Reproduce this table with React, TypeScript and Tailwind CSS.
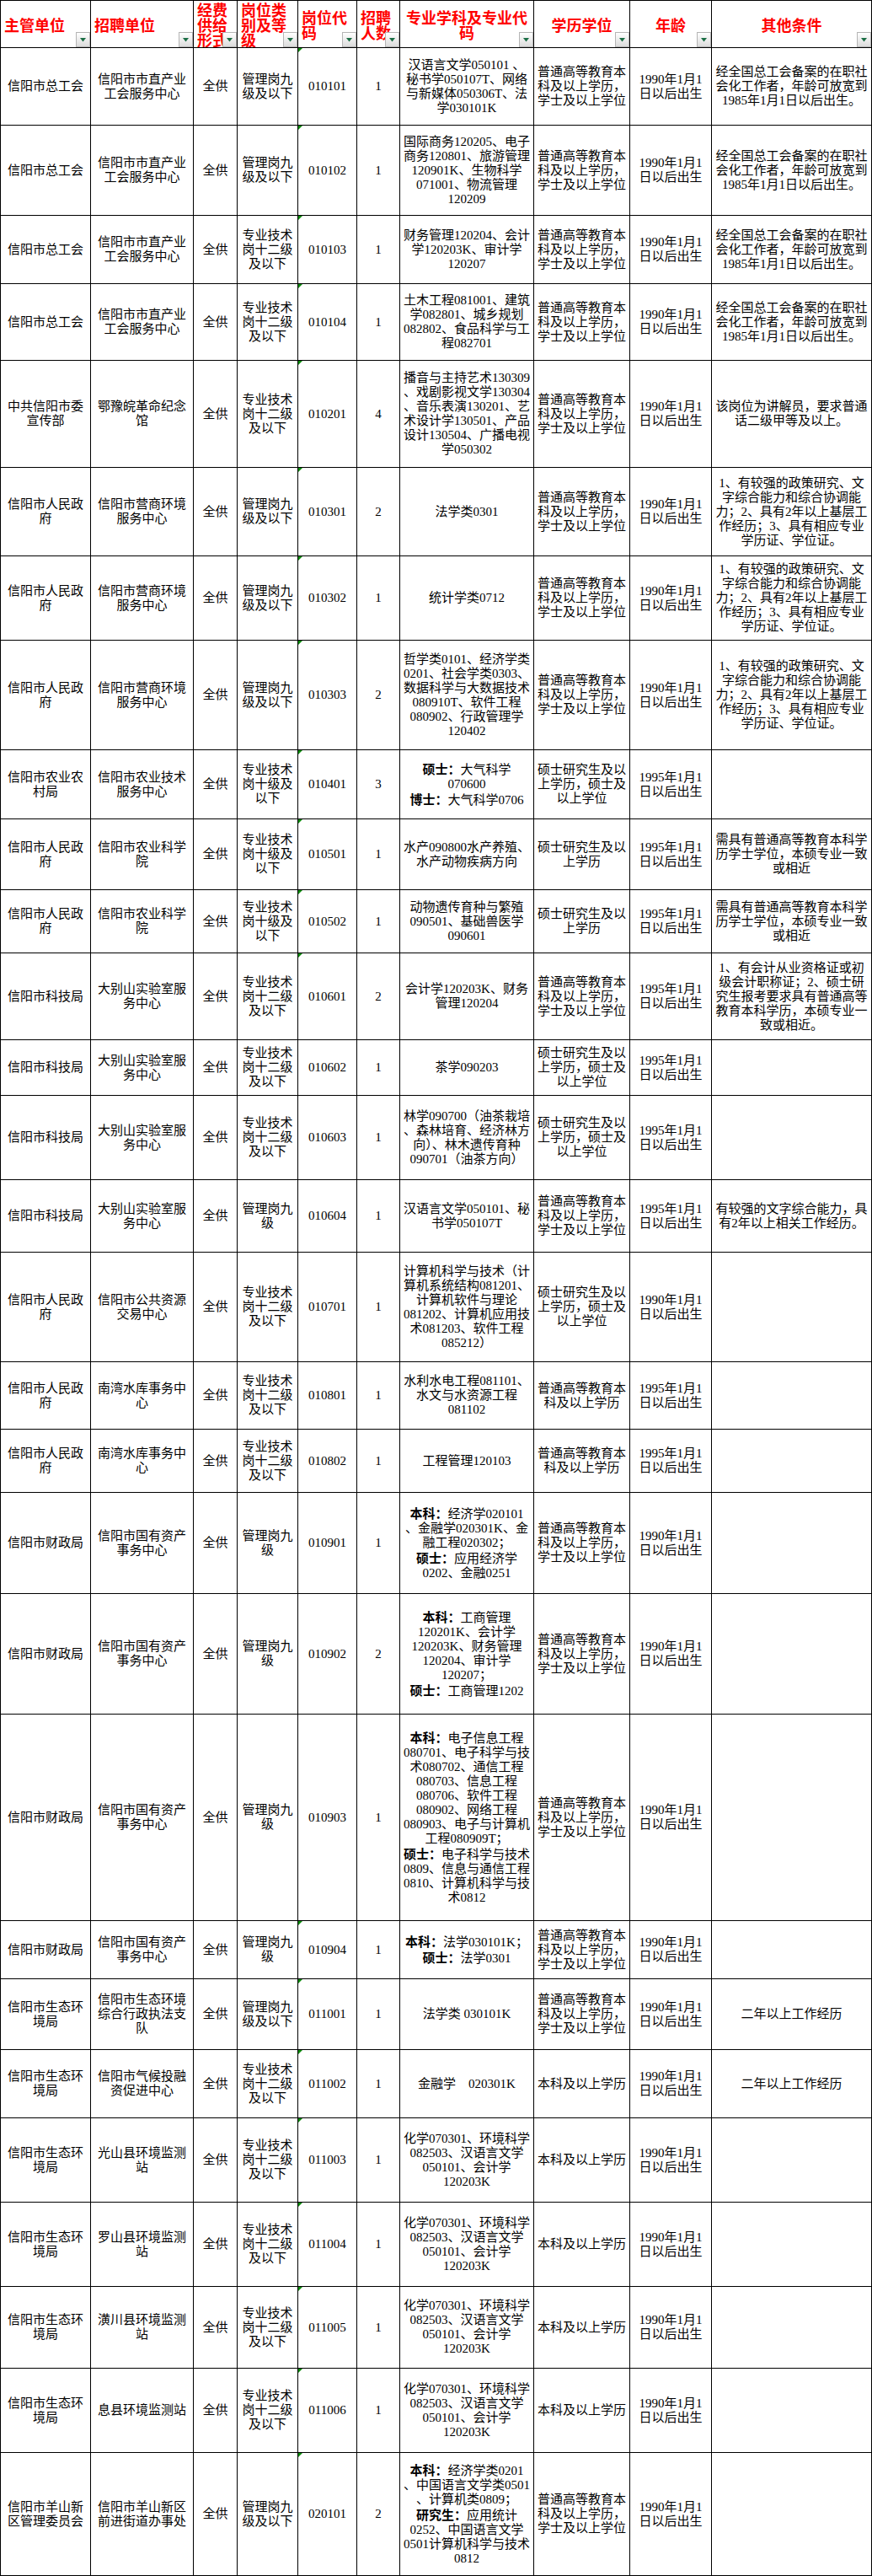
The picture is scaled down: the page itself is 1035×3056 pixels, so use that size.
import React from "react";

type Row = {
  h: string;
  org: string;
  unit: string;
  kind: string;
  code: string;
  num: string;
  major: string;
  edu: string;
  age: string;
  other: string;
  mark?: boolean;
};

// repeated cell texts
const BK = "普通高等教育本\n科及以上学历，\n学士及以上学位";
const BK2 = "普通高等教育本\n科及以上学历";
const SS = "硕士研究生及以\n上学历，硕士及\n以上学位";
const SS2 = "硕士研究生及以\n上学历";
const BKONLY = "本科及以上学历";
const A90 = "1990年1月1\n日以后出生";
const A95 = "1995年1月1\n日以后出生";
const ZGH = "经全国总工会备案的在职社\n会化工作者，年龄可放宽到\n1985年1月1日以后出生。";
const YS = "1、有较强的政策研究、文\n字综合能力和综合协调能\n力；2、具有2年以上基层工\n作经历；3、具有相应专业\n学历证、学位证。";
const NK = "需具有普通高等教育本科学\n历学士学位，本硕专业一致\n或相近";
const HJ = "化学070301、环境科学\n082503、汉语言文学\n050101、会计学\n120203K";
const GL9 = "管理岗九\n级及以下";
const GL9S = "管理岗九\n级";
const ZJ12 = "专业技术\n岗十二级\n及以下";
const ZJ10 = "专业技术\n岗十级及\n以下";
const RMZF = "信阳市人民政\n府";
const STHJ = "信阳市生态环\n境局";
const GZ = "信阳市国有资产\n事务中心";
const DBS = "大别山实验室服\n务中心";

const ROWS: Row[] = [
  { h: "h-[92px]", org: "信阳市总工会", unit: "信阳市市直产业\n工会服务中心", kind: GL9, code: "010101", num: "1", major: "汉语言文学050101 、\n秘书学050107T、网络\n与新媒体050306T、法\n学030101K", edu: BK, age: A90, other: ZGH, mark: true },
  { h: "h-[107px]", org: "信阳市总工会", unit: "信阳市市直产业\n工会服务中心", kind: GL9, code: "010102", num: "1", major: "国际商务120205、电子\n商务120801、旅游管理\n120901K、生物科学\n071001、物流管理\n120209", edu: BK, age: A90, other: ZGH, mark: true },
  { h: "h-[81px]", org: "信阳市总工会", unit: "信阳市市直产业\n工会服务中心", kind: ZJ12, code: "010103", num: "1", major: "财务管理120204、会计\n学120203K、审计学\n120207", edu: BK, age: A90, other: ZGH, mark: true },
  { h: "h-[91px]", org: "信阳市总工会", unit: "信阳市市直产业\n工会服务中心", kind: ZJ12, code: "010104", num: "1", major: "土木工程081001、建筑\n学082801、城乡规划\n082802、食品科学与工\n程082701", edu: BK, age: A90, other: ZGH, mark: true },
  { h: "h-[127px]", org: "中共信阳市委\n宣传部", unit: "鄂豫皖革命纪念\n馆", kind: ZJ12, code: "010201", num: "4", major: "播音与主持艺术130309\n、戏剧影视文学130304\n、音乐表演130201、艺\n术设计学130501、产品\n设计130504、广播电视\n学050302", edu: BK, age: A90, other: "该岗位为讲解员，要求普通\n话二级甲等及以上。", mark: true },
  { h: "h-[105px]", org: RMZF, unit: "信阳市营商环境\n服务中心", kind: GL9, code: "010301", num: "2", major: "法学类0301", edu: BK, age: A90, other: YS, mark: true },
  { h: "h-[100px]", org: RMZF, unit: "信阳市营商环境\n服务中心", kind: GL9, code: "010302", num: "1", major: "统计学类0712", edu: BK, age: A90, other: YS, mark: true },
  { h: "h-[130px]", org: RMZF, unit: "信阳市营商环境\n服务中心", kind: GL9, code: "010303", num: "2", major: "哲学类0101、经济学类\n0201、社会学类0303、\n数据科学与大数据技术\n080910T、软件工程\n080902、行政管理学\n120402", edu: BK, age: A90, other: YS, mark: true },
  { h: "h-[82px]", org: "信阳市农业农\n村局", unit: "信阳市农业技术\n服务中心", kind: ZJ10, code: "010401", num: "3", major: "硕士：大气科学\n070600\n博士：大气科学0706", edu: SS, age: A95, other: "", mark: true },
  { h: "h-[84px]", org: RMZF, unit: "信阳市农业科学\n院", kind: ZJ10, code: "010501", num: "1", major: "水产090800水产养殖、\n水产动物疾病方向", edu: SS2, age: A95, other: NK, mark: true },
  { h: "h-[75px]", org: RMZF, unit: "信阳市农业科学\n院", kind: ZJ10, code: "010502", num: "1", major: "动物遗传育种与繁殖\n090501、基础兽医学\n090601", edu: SS2, age: A95, other: NK, mark: true },
  { h: "h-[103px]", org: "信阳市科技局", unit: DBS, kind: ZJ12, code: "010601", num: "2", major: "会计学120203K、财务\n管理120204", edu: BK, age: A95, other: "1、有会计从业资格证或初\n级会计职称证；2、硕士研\n究生报考要求具有普通高等\n教育本科学历，本硕专业一\n致或相近。", mark: true },
  { h: "h-[66px]", org: "信阳市科技局", unit: DBS, kind: ZJ12, code: "010602", num: "1", major: "茶学090203", edu: SS, age: A95, other: "" },
  { h: "h-[100px]", org: "信阳市科技局", unit: DBS, kind: ZJ12, code: "010603", num: "1", major: "林学090700（油茶栽培\n、森林培育、经济林方\n向）、林木遗传育种\n090701（油茶方向）", edu: SS, age: A95, other: "" },
  { h: "h-[86px]", org: "信阳市科技局", unit: DBS, kind: GL9S, code: "010604", num: "1", major: "汉语言文学050101、秘\n书学050107T", edu: BK, age: A95, other: "有较强的文字综合能力，具\n有2年以上相关工作经历。" },
  { h: "h-[130px]", org: RMZF, unit: "信阳市公共资源\n交易中心", kind: ZJ12, code: "010701", num: "1", major: "计算机科学与技术（计\n算机系统结构081201、\n计算机软件与理论\n081202、计算机应用技\n术081203、软件工程\n085212）", edu: SS, age: A90, other: "" },
  { h: "h-[80px]", org: RMZF, unit: "南湾水库事务中\n心", kind: ZJ12, code: "010801", num: "1", major: "水利水电工程081101、\n水文与水资源工程\n081102", edu: BK2, age: A95, other: "" },
  { h: "h-[75px]", org: RMZF, unit: "南湾水库事务中\n心", kind: ZJ12, code: "010802", num: "1", major: "工程管理120103", edu: BK2, age: A95, other: "" },
  { h: "h-[120px]", org: "信阳市财政局", unit: GZ, kind: GL9S, code: "010901", num: "1", major: "本科：经济学020101\n、金融学020301K、金\n融工程020302；\n硕士：应用经济学\n0202、金融0251", edu: BK, age: A90, other: "" },
  { h: "h-[143px]", org: "信阳市财政局", unit: GZ, kind: GL9S, code: "010902", num: "2", major: "本科：工商管理\n120201K、会计学\n120203K、财务管理\n120204、审计学\n120207；\n硕士：工商管理1202", edu: BK, age: A90, other: "" },
  { h: "h-[245px]", org: "信阳市财政局", unit: GZ, kind: GL9S, code: "010903", num: "1", major: "本科：电子信息工程\n080701、电子科学与技\n术080702、通信工程\n080703、信息工程\n080706、软件工程\n080902、网络工程\n080903、电子与计算机\n工程080909T；\n硕士：电子科学与技术\n0809、信息与通信工程\n0810、计算机科学与技\n术0812", edu: BK, age: A90, other: "" },
  { h: "h-[69px]", org: "信阳市财政局", unit: GZ, kind: GL9S, code: "010904", num: "1", major: "本科：法学030101K；\n硕士：法学0301", edu: BK, age: A90, other: "", mark: true },
  { h: "h-[84px]", org: STHJ, unit: "信阳市生态环境\n综合行政执法支\n队", kind: GL9, code: "011001", num: "1", major: "法学类 030101K", edu: BK, age: A90, other: "二年以上工作经历", mark: true },
  { h: "h-[81px]", org: STHJ, unit: "信阳市气候投融\n资促进中心", kind: ZJ12, code: "011002", num: "1", major: "金融学\u3000020301K", edu: BKONLY, age: A90, other: "二年以上工作经历", mark: true },
  { h: "h-[100px]", org: STHJ, unit: "光山县环境监测\n站", kind: ZJ12, code: "011003", num: "1", major: HJ, edu: BKONLY, age: A90, other: "", mark: true },
  { h: "h-[100px]", org: STHJ, unit: "罗山县环境监测\n站", kind: ZJ12, code: "011004", num: "1", major: HJ, edu: BKONLY, age: A90, other: "", mark: true },
  { h: "h-[97px]", org: STHJ, unit: "潢川县环境监测\n站", kind: ZJ12, code: "011005", num: "1", major: HJ, edu: BKONLY, age: A90, other: "", mark: true },
  { h: "h-[100px]", org: STHJ, unit: "息县环境监测站", kind: ZJ12, code: "011006", num: "1", major: HJ, edu: BKONLY, age: A90, other: "", mark: true },
  { h: "h-[146px]", org: "信阳市羊山新\n区管理委员会", unit: "信阳市羊山新区\n前进街道办事处", kind: GL9, code: "020101", num: "2", major: "本科：经济学类0201\n、中国语言文学类0501\n、计算机类0809；\n研究生：应用统计\n0252、中国语言文学\n0501计算机科学与技术\n0812", edu: BK, age: A90, other: "", mark: true },
];

const HEADERS: { text: string; center?: boolean }[] = [
  { text: "主管单位" },
  { text: "招聘单位" },
  { text: "经费\n供给\n形式" },
  { text: "岗位类\n别及等\n级" },
  { text: "岗位代\n码" },
  { text: "招聘\n人数" },
  { text: "专业学科及专业代\n码", center: true },
  { text: "学历学位", center: true },
  { text: "年龄", center: true },
  { text: "其他条件", center: true },
];

const COLS = ["w-[107px]", "w-[122px]", "w-[52px]", "w-[72px]", "w-[70px]", "w-[51px]", "w-[159px]", "w-[114px]", "w-[97px]", "w-[190px]"];

function Lines({ text }: { text: string }) {
  if (!text) return null;
  return (
    <>
      {text.split("\n").map((line, i) => {
        const m = line.match(/^(本科|硕士|博士|研究生)：(.*)$/);
        return (
          <div key={i}>
            {m ? (
              <>
                <span className="font-bold font-['Noto_Sans_CJK_SC',sans-serif]">{m[1]}：</span>
                {m[2]}
              </>
            ) : (
              line
            )}
          </div>
        );
      })}
    </>
  );
}

function FilterButton() {
  return (
    <div className="absolute right-0 bottom-0 w-[17px] h-[18px] flex items-center justify-center border border-[#b5b5b5] bg-gradient-to-b from-white to-[#dcdcdc]">
      <svg width="7" height="5" viewBox="0 0 7 5">
        <path d="M0 0 H7 L3.5 4.5 Z" fill="#1b6e45" />
      </svg>
    </div>
  );
}

function TextMark() {
  return (
    <svg className="absolute top-0 left-0" width="5" height="5" viewBox="0 0 5 5">
      <path d="M0 0 H5 L0 5 Z" fill="#0a8a0a" />
    </svg>
  );
}

const cell = "border-r border-b border-black px-[2px] text-center align-middle overflow-hidden whitespace-nowrap";

export default function App() {
  return (
    <div className="bg-white min-h-screen">
      <table className="table-fixed border-separate border-spacing-0 border-l border-t border-black w-[1035px] text-black text-[15px] leading-[17px] font-['Liberation_Serif','Noto_Sans_CJK_SC',serif]">
        <colgroup>
          {COLS.map((c, i) => (
            <col key={i} className={c} />
          ))}
        </colgroup>
        <thead>
          <tr className="h-[56px]">
            {HEADERS.map((hd, i) => (
              <th
                key={i}
                className={`relative border-r border-b border-black px-[4px] align-middle overflow-hidden whitespace-nowrap font-bold text-[18px] leading-[18px] text-[#ff0000] font-['Noto_Sans_CJK_SC',sans-serif] ${
                  hd.center ? "text-center" : "text-left"
                }`}
              >
                <Lines text={hd.text} />
                <FilterButton />
              </th>
            ))}
          </tr>
        </thead>
        <tbody>
          {ROWS.map((r) => (
            <tr key={r.code} className={r.h}>
              <td className={cell}><Lines text={r.org} /></td>
              <td className={cell}><Lines text={r.unit} /></td>
              <td className={cell}>全供</td>
              <td className={cell}><Lines text={r.kind} /></td>
              <td className={`relative ${cell}`}>
                {r.mark && <TextMark />}
                {r.code}
              </td>
              <td className={cell}>{r.num}</td>
              <td className={cell}><Lines text={r.major} /></td>
              <td className={cell}><Lines text={r.edu} /></td>
              <td className={cell}><Lines text={r.age} /></td>
              <td className={cell}><Lines text={r.other} /></td>
            </tr>
          ))}
        </tbody>
      </table>
    </div>
  );
}
